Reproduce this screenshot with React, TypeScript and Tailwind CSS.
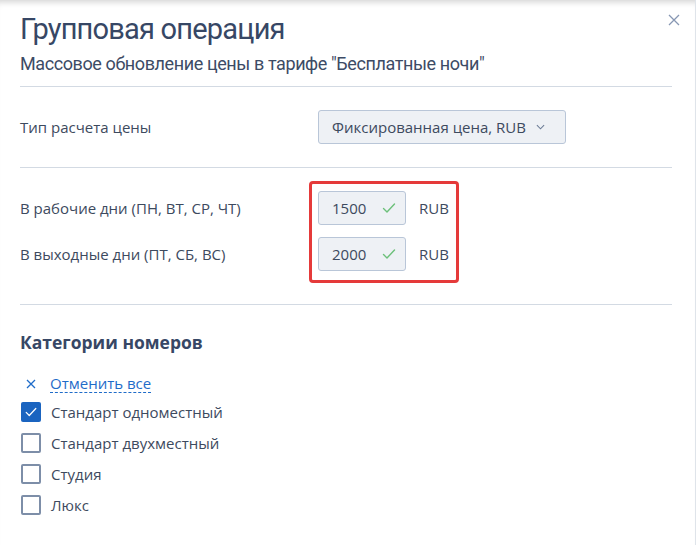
import React from 'react';

const categories = [
  { name: 'Стандарт одноместный', checked: true },
  { name: 'Стандарт двухместный', checked: false },
  { name: 'Студия', checked: false },
  { name: 'Люкс', checked: false },
];

const Check: React.FC<{ className?: string }> = ({ className }) => (
  <svg viewBox="0 0 16 16" className={className} fill="none" stroke="currentColor" strokeWidth="1.4" strokeLinecap="round" strokeLinejoin="round">
    <path d="M2.5 8.5l3.5 3.5 7.5-8" />
  </svg>
);

const PriceInput: React.FC<{ value: string }> = ({ value }) => (
  <div className="flex items-center gap-[13px]">
    <div className="flex h-[34px] w-[88px] items-center justify-between rounded-[3px] border border-[#b9c6d8] bg-[#eef1f5] pl-[13px] pr-[8px] text-[15px] text-[#3d4a5e]">
      <span>{value}</span>
      <Check className="h-[16px] w-[16px] text-[#6cc07a]" />
    </div>
    <span className="text-[15px] text-[#3d4a5e]">RUB</span>
  </div>
);

const App: React.FC = () => {
  return (
    <div className="relative h-[545px] w-[696px] overflow-hidden border-r border-[#dfe4ea] bg-white shadow-[inset_0_7px_6px_-5px_rgba(0,0,0,0.18)]" style={{ fontFamily: '"Open Sans", sans-serif' }}>
      <button className="absolute right-[15px] top-[14px] text-[#8797b3]">
        <svg viewBox="0 0 12 12" className="h-[12px] w-[12px]" stroke="currentColor" strokeWidth="1.3">
          <path d="M1 1l10 10M11 1L1 11" />
        </svg>
      </button>

      <div className="px-[20px] pt-[10px]">
        <div style={{ fontFamily: 'Roboto, sans-serif' }}>
          <h1 className="text-[29px] leading-[38px] tracking-[-0.8px] text-[#374765]">Групповая операция</h1>
          <p className="mt-[4px] text-[18px] leading-[24px] tracking-[-0.4px] text-[#3d4b65]">Массовое обновление цены в тарифе "Бесплатные ночи"</p>
        </div>

        <div className="mt-[10px] w-[652px] border-t border-[#d3dae3]" />

        <div className="flex items-center py-[23px]">
          <span className="w-[298px] text-[15px] text-[#3d4a5e]">Тип расчета цены</span>
          <div className="flex h-[34px] w-[248px] items-center gap-[10px] rounded-[3px] border border-[#b9c6d8] bg-[#eef1f5] pl-[13px] text-[15px] text-[#3d4a5e]">
            <span>Фиксированная цена, RUB</span>
            <svg viewBox="0 0 10 6" className="h-[6px] w-[9px] text-[#6c7c96]" fill="none" stroke="currentColor" strokeWidth="1.2">
              <path d="M1 1l4 4 4-4" />
            </svg>
          </div>
        </div>

        <div className="w-[652px] border-t border-[#d3dae3]" />

        <div className="relative flex flex-col gap-[12px] pb-[33px] pt-[23px]">
          <div className="flex items-center">
            <span className="w-[298px] text-[15px] text-[#3d4a5e]">В рабочие дни (ПН, ВТ, СР, ЧТ)</span>
            <PriceInput value="1500" />
          </div>
          <div className="flex items-center">
            <span className="w-[298px] text-[15px] text-[#3d4a5e]">В выходные дни (ПТ, СБ, ВС)</span>
            <PriceInput value="2000" />
          </div>
          <div className="pointer-events-none absolute left-[289px] top-[13px] h-[102px] w-[150px] rounded-[4px] border-[3px] border-[#e53a3a]" />
        </div>

        <div className="w-[652px] border-t border-[#d3dae3]" />

        <h2 className="mt-[25px] text-[17.5px] font-bold leading-[24px] text-[#374765]">Категории номеров</h2>

        <div className="mt-[20px] flex items-center gap-[14px] pl-[6px] text-[15px] leading-[20px] text-[#1f6cc9]">
          <svg viewBox="0 0 10 10" className="h-[10px] w-[10px]" stroke="currentColor" strokeWidth="1.3">
            <path d="M1 1l8 8M9 1L1 9" />
          </svg>
          <span className="border-b border-dashed border-[#1f6cc9] leading-[18px]">Отменить все</span>
        </div>

        <ul className="mt-[9px] flex flex-col gap-[11px]">
          {categories.map((c) => (
            <li key={c.name} className="flex items-center gap-[10px] pl-[1px]">
              {c.checked ? (
                <span className="flex h-[20px] w-[20px] items-center justify-center rounded-[2px] bg-[#1a64c0] text-white">
                  <Check className="h-[14px] w-[14px]" />
                </span>
              ) : (
                <span className="h-[20px] w-[20px] rounded-[2px] border-2 border-[#7d8ea8] bg-white" />
              )}
              <span className="text-[15px] leading-[20px] text-[#3d4a5e]">{c.name}</span>
            </li>
          ))}
        </ul>
      </div>
    </div>
  );
};

export default App;
